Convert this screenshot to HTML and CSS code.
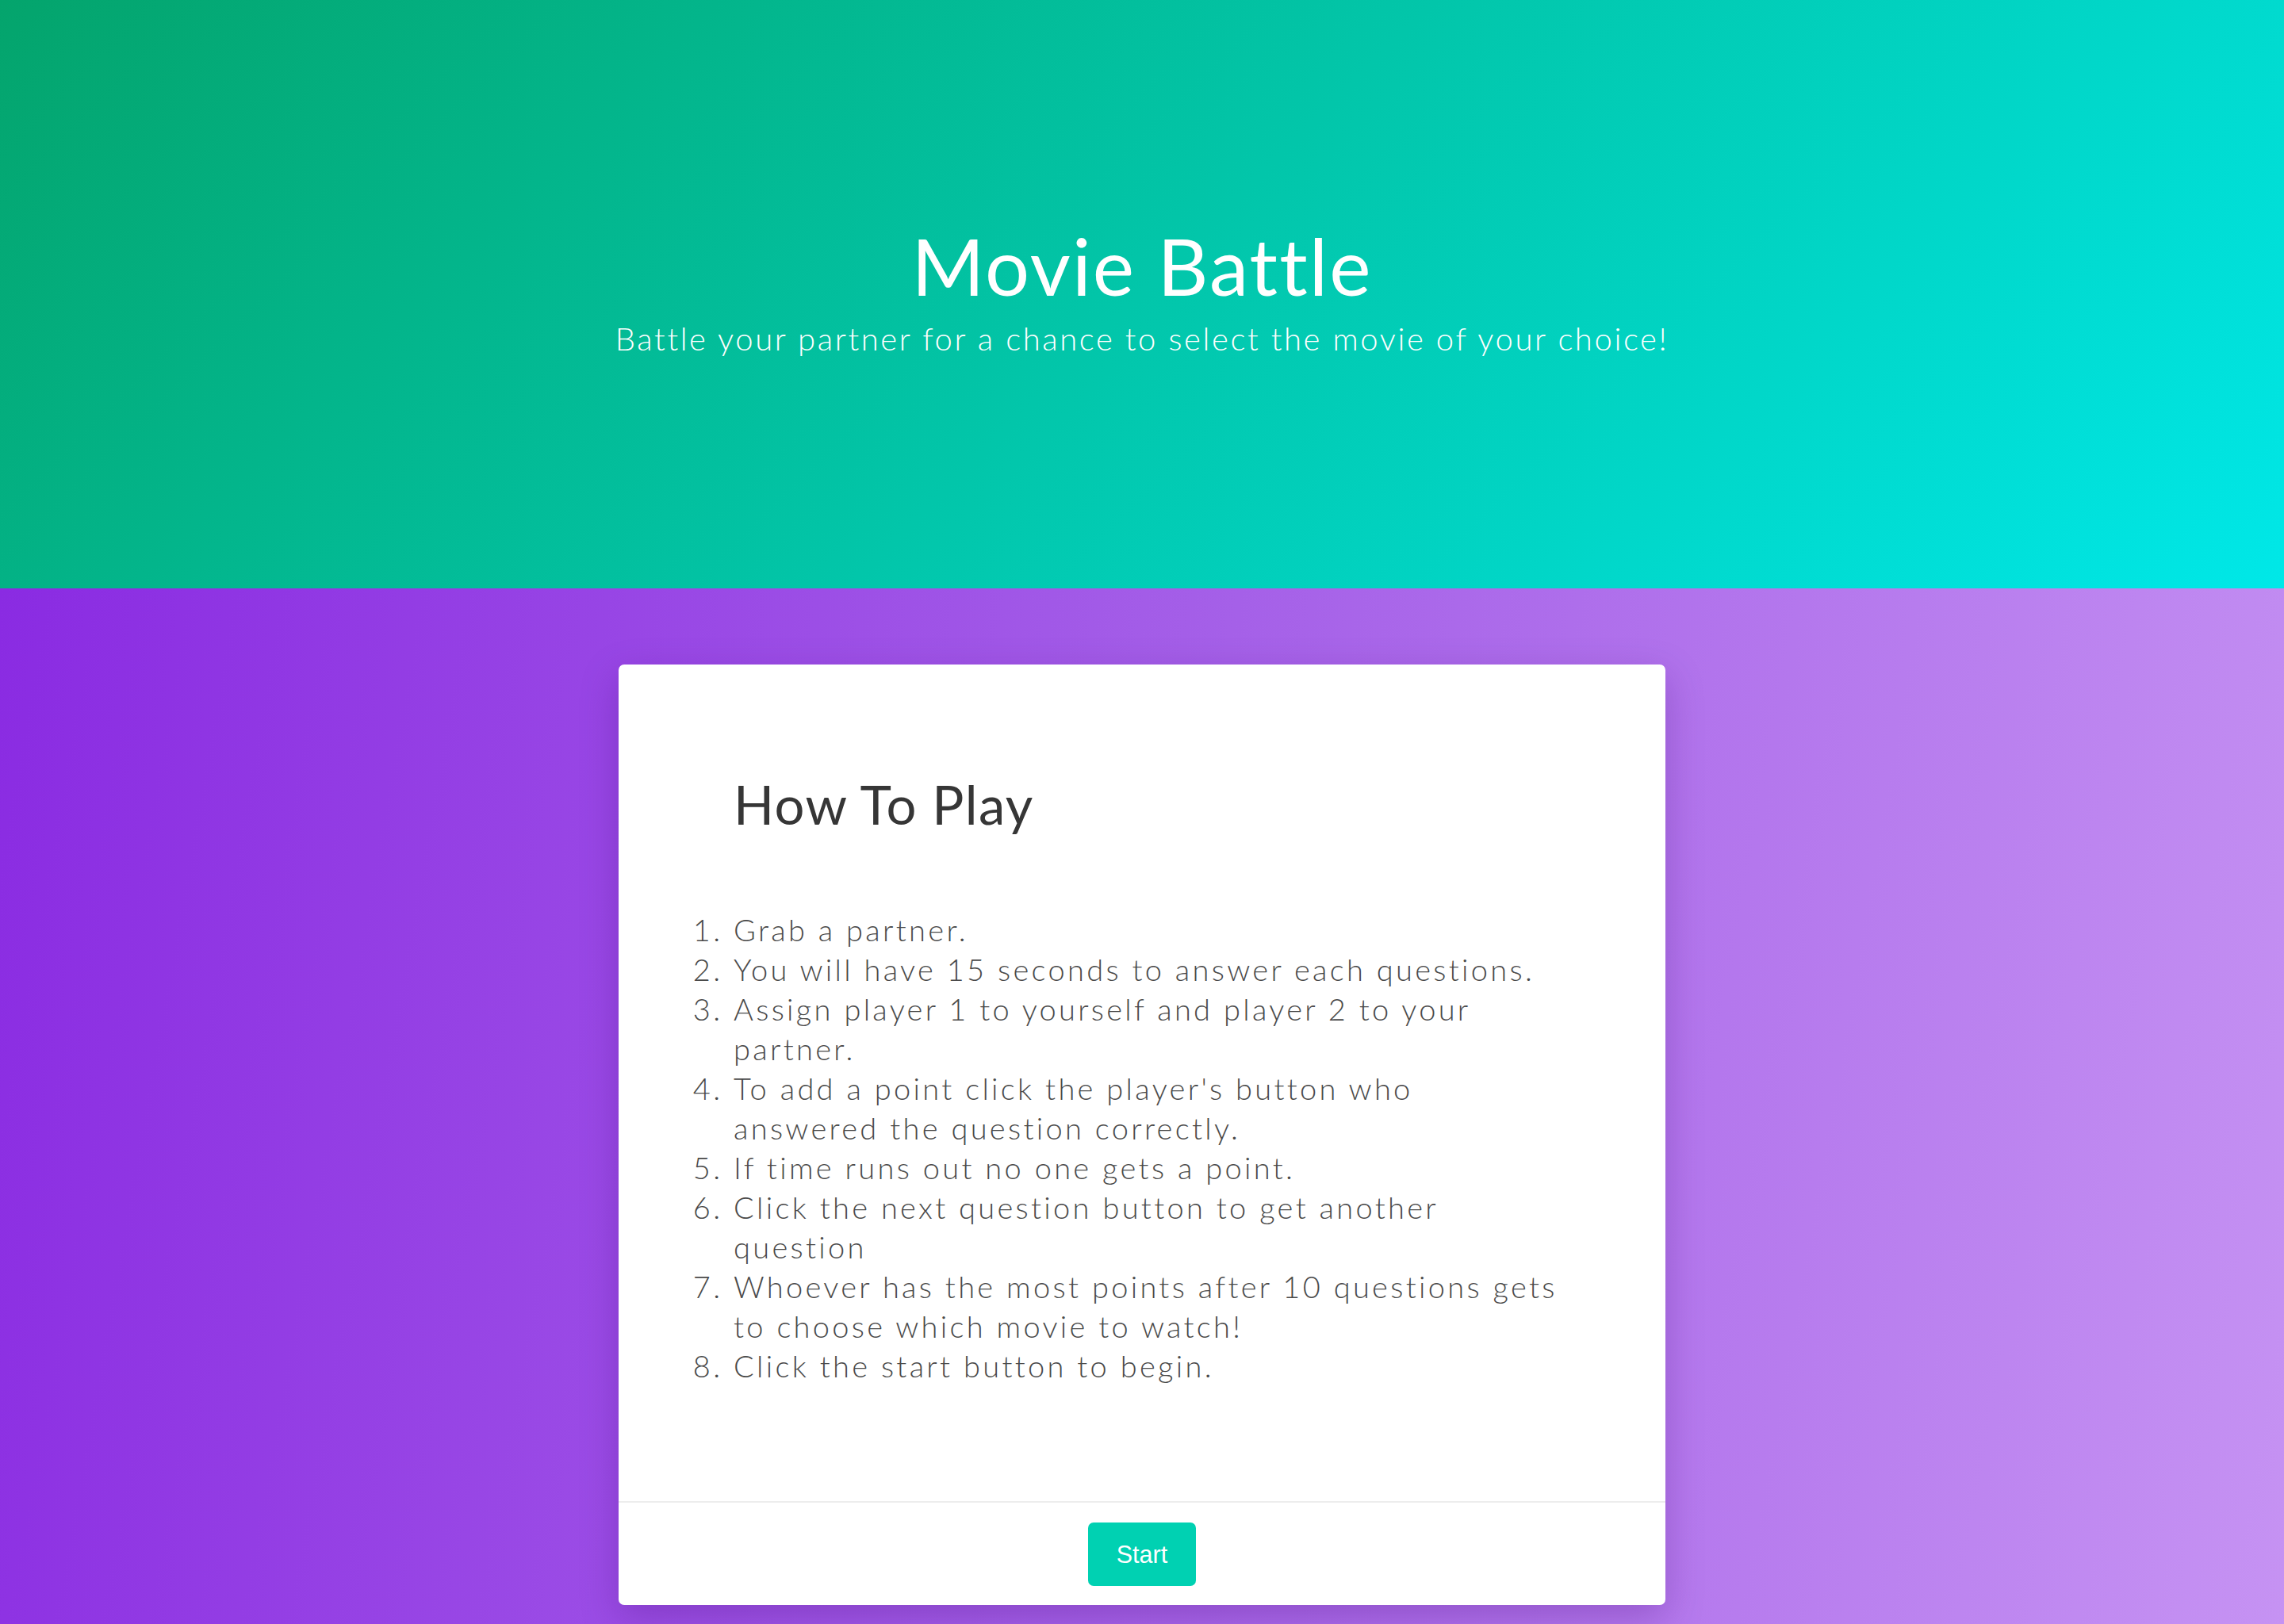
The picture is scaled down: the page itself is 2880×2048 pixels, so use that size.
FILE: index.html
```html
<!DOCTYPE html>
<html lang="en">
<head>
<meta charset="utf-8">
<title>Movie Battle</title>
<link rel="stylesheet" href="styles.css">
</head>
<body>
  <header class="hero">
    <h1 class="hero-title">Movie Battle</h1>
    <p class="hero-subtitle">Battle your partner for a chance to select the movie of your choice!</p>
  </header>
  <main class="stage">
    <section class="card">
      <div class="card-content">
        <h2 class="card-title">How To Play</h2>
        <ol class="rules">
          <li>Grab a partner.</li>
          <li>You will have 15 seconds to answer each questions.</li>
          <li>Assign player 1 to yourself and player 2 to your partner.</li>
          <li>To add a point click the player's button who answered the question correctly.</li>
          <li>If time runs out no one gets a point.</li>
          <li>Click the next question button to get another question</li>
          <li>Whoever has the most points after 10 questions gets to choose which movie to watch!</li>
          <li>Click the start button to begin.</li>
        </ol>
      </div>
      <footer class="card-footer">
        <button class="btn-start" type="button">Start</button>
      </footer>
    </section>
  </main>
</body>
</html>
```

FILE: styles.css
```css
html, body {
  margin: 0;
  padding: 0;
}

body {
  font-family: "Lato", "Open Sans", "Liberation Sans", sans-serif;
  color: #4a4a4a;
  background: #8a2be2;
}

.hero {
  box-sizing: border-box;
  height: 742px;
  padding-top: 276px;
  text-align: center;
  color: #ffffff;
  background: linear-gradient(135deg, #04a46c 0%, #00e8e8 100%);
}

.hero-title {
  margin: 0;
  font-size: 99px;
  line-height: 1.2;
  font-weight: 400;
  letter-spacing: 2.1px;
}

.hero-subtitle {
  margin: 8px 0 0;
  font-size: 40px;
  line-height: 1.2;
  font-weight: 300;
  letter-spacing: 2.6px;
}

.stage {
  padding: 96px 0 120px;
  background: linear-gradient(100deg, #8a2be2 0%, #a560e8 50%, #c693f3 100%);
}

.card {
  width: 1320px;
  margin: 0 auto;
  background: #ffffff;
  border-radius: 7px;
  overflow: hidden;
  box-shadow: 0 16px 48px rgba(70, 10, 120, 0.28);
}

.card-content {
  padding: 136px 128px 146px 145px;
}

.card-title {
  margin: 0 0 93px;
  font-size: 67px;
  line-height: 1.2;
  font-weight: 400;
  color: #363636;
  letter-spacing: 1.4px;
}

.rules {
  margin: 0;
  padding: 0;
  font-size: 38px;
  line-height: 50px;
  font-weight: 300;
  color: #4a4a4a;
  letter-spacing: 3.3px;
}

.card-footer {
  display: flex;
  justify-content: center;
  border-top: 2px solid #ededed;
  padding: 25px 0 24px;
}

.btn-start {
  height: 80px;
  width: 136px;
  border: none;
  border-radius: 7px;
  background: #00d1b2;
  color: #ffffff;
  font-family: "Liberation Sans", Arial, sans-serif;
  font-size: 30.5px;
  cursor: pointer;
}
```
